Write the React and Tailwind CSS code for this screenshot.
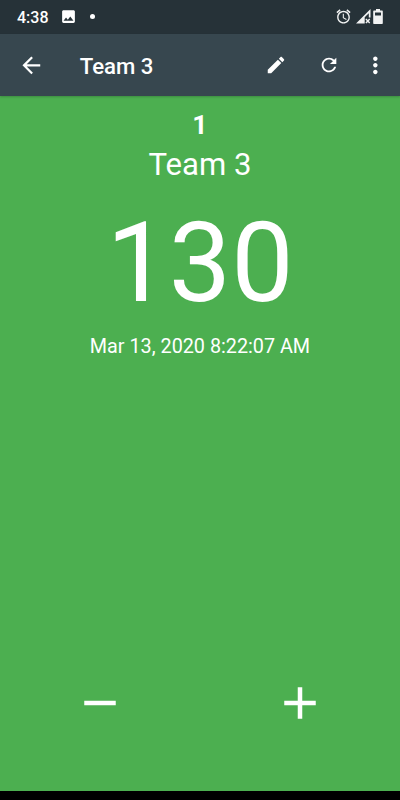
import React, { useState } from "react";

const Icon = ({ path, className }) => (
  <svg viewBox="0 0 24 24" fill="currentColor" className={className}>
    <path d={path} />
  </svg>
);

const icons = {
  back: "M20 11H7.83l5.59-5.59L12 4l-8 8 8 8 1.41-1.41L7.83 13H20v-2z",
  edit: "M3 17.25V21h3.75L17.81 9.94l-3.75-3.75L3 17.25zM20.71 7.04c.39-.39.39-1.02 0-1.41l-2.34-2.34c-.39-.39-1.02-.39-1.41 0l-1.83 1.83 3.75 3.75 1.83-1.83z",
  refresh:
    "M17.65 6.35C16.2 4.9 14.21 4 12 4c-4.42 0-7.99 3.58-7.99 8s3.57 8 7.99 8c3.73 0 6.84-2.55 7.73-6h-2.08c-.82 2.33-3.04 4-5.65 4-3.31 0-6-2.69-6-6s2.69-6 6-6c1.66 0 3.14.69 4.22 1.78L13 11h7V4l-2.35 2.35z",
  more: "M12 8c1.1 0 2-.9 2-2s-.9-2-2-2-2 .9-2 2 .9 2 2 2zm0 2c-1.1 0-2 .9-2 2s.9 2 2 2 2-.9 2-2-.9-2-2-2zm0 6c-1.1 0-2 .9-2 2s.9 2 2 2 2-.9 2-2-.9-2-2-2z",
  image:
    "M21 19V5c0-1.1-.9-2-2-2H5c-1.1 0-2 .9-2 2v14c0 1.1.9 2 2 2h14c1.1 0 2-.9 2-2zM8.5 13.5l2.5 3.01L14.5 12l4.5 6H5l3.5-4.5z",
  alarm:
    "M22 5.72l-4.6-3.86-1.29 1.53 4.6 3.86L22 5.72zM7.88 3.39L6.6 1.86 2 5.71l1.29 1.53 4.59-3.85zM12.5 8H11v6l4.75 2.85.75-1.23-4-2.37V8zM12 4c-4.97 0-9 4.03-9 9s4.02 9 9 9c4.97 0 9-4.03 9-9s-4.03-9-9-9zm0 16c-3.87 0-7-3.13-7-7s3.13-7 7-7 7 3.13 7 7-3.13 7-7 7z",
  remove: "M19 13H5v-2h14v2z",
  add: "M19 13h-6v6h-2v-6H5v-2h6V5h2v6h6v2z",
};

const StatusBar = () => (
  <div className="flex h-[34px] shrink-0 items-center bg-[#263238] pb-px pl-[17px] pr-[17px]">
    <span className="w-[43px] pt-[2px] text-[16px] font-medium leading-[31px]">4:38</span>
    <Icon path={icons.image} className="size-[17px]" />
    <span className="ml-[13px] size-[5px] rounded-full bg-white" />
    <div className="ml-auto flex items-center">
      <Icon path={icons.alarm} className="size-[17px] text-[#f1f2f2]" />
      {/* Signal, no service */}
      <svg viewBox="0 0 15 15" className="ml-[4px] h-[15px] w-[15px] text-[#f1f2f2]">
        <path d="M0 14.5L14.5 0V8.5H12.8V4.2L8.7 8.3V14.5Z" fill="currentColor" />
        <path d="M9.9 10l3.8 4M13.7 10l-3.8 4" stroke="currentColor" strokeWidth="1.4" />
      </svg>
      <svg viewBox="0 0 10 15" className="ml-[2px] h-[15px] w-[10px] text-[#f1f2f2]">
        <path
          fillRule="evenodd"
          fill="currentColor"
          d="M3 0h4v1.5h1.8c.6 0 1 .4 1 1V14c0 .6-.4 1-1 1H1.2c-.6 0-1-.4-1-1V2.5c0-.6.4-1 1-1H3zM2 3.6V6.5h6V3.6z"
        />
      </svg>
    </div>
  </div>
);

const AppBar = ({ title, onReset }) => (
  <header className="relative flex h-[62px] shrink-0 items-center bg-[#37474f] pl-[18px] pr-[11px] shadow-[0_1px_2px_rgba(0,0,0,0.2)]">
    <button aria-label="Back">
      <Icon path={icons.back} className="size-[26.7px]" />
    </button>
    <h1 className="ml-[35px] pt-[3px] text-[22.2px] font-medium">{title}</h1>
    <div className="ml-auto flex items-center">
      <button aria-label="Edit">
        <Icon path={icons.edit} className="size-[22px]" />
      </button>
      <button aria-label="Reset" className="ml-[31.5px]" onClick={onReset}>
        <Icon path={icons.refresh} className="size-[22px]" />
      </button>
      <button aria-label="More" className="ml-[22px]">
        <Icon path={icons.more} className="size-[26.7px]" />
      </button>
    </div>
  </header>
);

const App = () => {
  const [score, setScore] = useState(130);

  return (
    <div className="flex h-screen w-full flex-col overflow-hidden bg-black font-[Roboto,sans-serif] text-white">
      <StatusBar />
      <AppBar title="Team 3" onReset={() => setScore(0)} />

      <main className="flex flex-1 flex-col items-center bg-[#4caf50] pt-[13px]">
        <p className="text-[26.7px] font-bold leading-[32px]">1</p>
        <h2 className="mt-[5px] text-[31.1px] leading-[38px]">Team 3</h2>
        <p className="mt-[14px] text-[111px] leading-[130px]">{score}</p>
        <p className="mt-[6px] text-[19.8px] leading-[25px]">Mar 13, 2020 8:22:07 AM</p>

        {/* Score buttons */}
        <div className="mt-auto mb-[61.5px] grid w-full grid-cols-2">
          <button aria-label="Decrease" className="flex justify-center" onClick={() => setScore(score - 1)}>
            <Icon path={icons.remove} className="size-[54px]" />
          </button>
          <button aria-label="Increase" className="flex justify-center" onClick={() => setScore(score + 1)}>
            <Icon path={icons.add} className="size-[54px]" />
          </button>
        </div>
      </main>
      <div className="h-[9px] shrink-0 bg-black" />
    </div>
  );
};

export default App;
